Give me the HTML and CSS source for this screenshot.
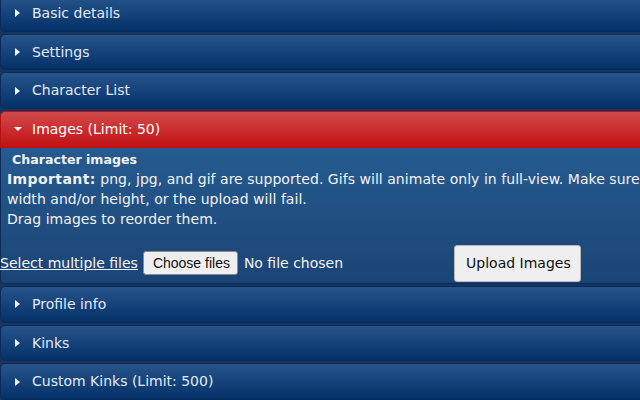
FILE: index.html
```html
<!DOCTYPE html>
<html>
    <head>
        <title>Edit character</title>
        <meta http-equiv="Content-Type" content="text/html;charset=utf-8"/>
        <link rel="stylesheet" href="styles.css">
    </head>
    <body>
        <div class="accordion">
            <h3 class="acc-head">Basic details</h3>
            <h3 class="acc-head">Settings</h3>
            <h3 class="acc-head">Character List</h3>
            <h3 class="acc-head active">Images (Limit: 50)</h3>
            <div class="acc-content">
                <h4>Character images</h4>
                <p><b>Important:</b> png, jpg, and gif are supported. Gifs will animate only in full-view. Make sure images are no larger than 3000 pixels in<br/>
                    width and/or height, or the upload will fail.<br/>
                    Drag images to reorder them.</p>
                <form class="upload-row" action="#">
                    <a href="#" class="multi">Select multiple files</a>
                    <label class="choose">Choose files<input type="file" multiple class="file"/></label>
                    <span class="nofile">No file chosen</span>
                    <button type="button" class="upload">Upload Images</button>
                </form>
            </div>
            <h3 class="acc-head">Profile info</h3>
            <h3 class="acc-head">Kinks</h3>
            <h3 class="acc-head">Custom Kinks (Limit: 500)</h3>
        </div>
    </body>
</html>
```

FILE: styles.css
```css
* { box-sizing: border-box; }

html, body {
    background: #17355f;
    color: #f2f2f2;
    font-family: "DejaVu Sans", Verdana, sans-serif;
    font-size: 14px;
    height: 400px;
    margin: 0px;
    overflow: hidden;
    padding: 0px;
}

.accordion {
    margin-top: -5px;
    width: 1000px;
}

.acc-head {
    align-items: center;
    background: linear-gradient(#26548b, #053169);
    border: 1px solid #0d2b59;
    border-radius: 5px;
    color: #e4eaf2;
    display: flex;
    font-size: 14px;
    font-weight: normal;
    line-height: 16.7px;
    margin: 2px 0px 0px 0px;
    padding: 9px 10px 9px 14px;
}

.acc-head:first-child { margin-top: 0px; }

.acc-head::before {
    border-bottom: 4px solid transparent;
    border-left: 5px solid #f4f6f9;
    border-top: 4px solid transparent;
    content: "";
    display: block;
    height: 0px;
    margin-right: 12px;
    width: 0px;
}

.acc-head.active {
    background: linear-gradient(#d34a4a, #c10f12);
    border-color: #b51313;
    border-bottom: 0px;
    border-radius: 5px 5px 0px 0px;
    color: #fff;
    padding-bottom: 10px;
}

.acc-head.active::before {
    border-left: 4px solid transparent;
    border-right: 4px solid transparent;
    border-top: 4px solid #fff;
    border-bottom: 0px;
    margin-left: -1px;
    margin-right: 10px;
}

.acc-content {
    background: linear-gradient(#265b90, #1b4475);
    border: 1px solid #0d2b59;
    border-radius: 0px 0px 5px 5px;
    border-top: 0px;
    padding: 3px 0px 1px 0px;
}

.acc-content h4 {
    font-size: 12.6px;
    line-height: 18px;
    margin: 0px 0px 0px 11px;
}

.acc-content p {
    letter-spacing: 0.04px;
    line-height: 20px;
    margin: 0px 0px 0px 6px;
}

.acc-content p b { letter-spacing: 0.4px; }

.upload-row {
    align-items: center;
    display: flex;
    margin-top: 16px;
    white-space: nowrap;
}

.upload-row > * { flex-shrink: 0; }

.multi {
    color: #f4f4f4;
    margin-left: -1px;
    margin-right: 5px;
}

.choose {
    background: #efefef;
    border: 1px solid #8a8a8a;
    border-radius: 3px;
    color: #111;
    font-family: "Liberation Sans", Arial, sans-serif;
    font-size: 14px;
    height: 24px;
    line-height: 22px;
    padding: 0px 9px;
    text-align: center;
    width: 95px;
}

.file { display: none; }

.nofile {
    color: #f4f4f4;
    margin-left: 6px;
}

.upload {
    background: #efefef;
    border: 1px solid #b9b9b9;
    border-radius: 3px;
    color: #111;
    font-family: "DejaVu Sans", Verdana, sans-serif;
    font-size: 14px;
    height: 37px;
    line-height: 17px;
    margin-left: 111px;
    padding: 0px 11px;
    width: 127px;
}
```
